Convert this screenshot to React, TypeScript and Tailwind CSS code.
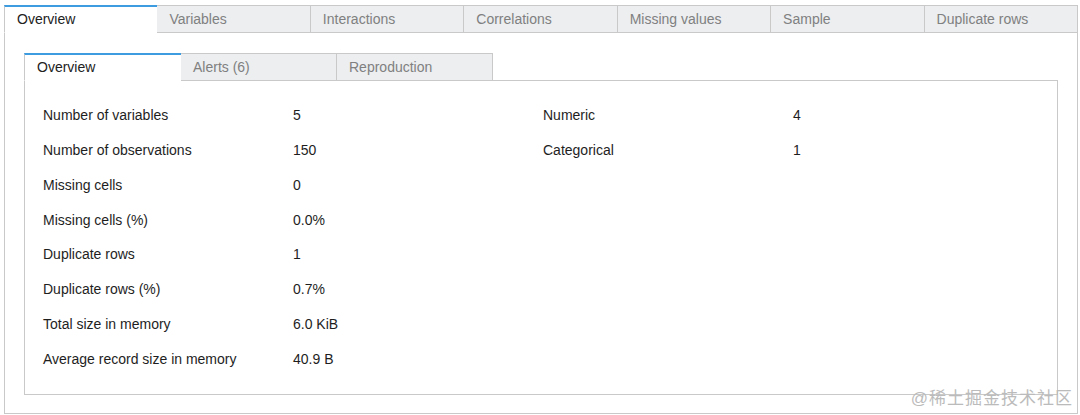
import React from 'react';

const OUTER_TABS = ['Overview', 'Variables', 'Interactions', 'Correlations', 'Missing values', 'Sample', 'Duplicate rows'];
const INNER_TABS = ['Overview', 'Alerts (6)', 'Reproduction'];

const LEFT_ROWS: [string, string][] = [
  ['Number of variables', '5'],
  ['Number of observations', '150'],
  ['Missing cells', '0'],
  ['Missing cells (%)', '0.0%'],
  ['Duplicate rows', '1'],
  ['Duplicate rows (%)', '0.7%'],
  ['Total size in memory', '6.0 KiB'],
  ['Average record size in memory', '40.9 B'],
];

const RIGHT_ROWS: [string, string][] = [
  ['Numeric', '4'],
  ['Categorical', '1'],
];

const Tab: React.FC<{ label: string; active: boolean; className?: string }> = ({ label, active, className }) => (
  <div
    className={
      (active
        ? 'bg-white text-[#222] border-t-2 border-t-[#3d9be0] border-l border-l-[#c9c9c9] border-b border-b-white '
        : 'bg-[#eceef0] text-[#808080] border border-[#c9c9c9] border-l-0 ') +
      'h-[28px] flex items-center px-3 text-[14px] ' +
      (className ?? '')
    }
  >
    {label}
  </div>
);

const StatsTable: React.FC<{ rows: [string, string][] }> = ({ rows }) => (
  <div className="flex flex-col w-[500px]">
    {rows.map(([k, v]) => (
      <div key={k} className="flex h-[35px] items-center text-[14px] text-[#1e1e1e]">
        <div className="w-[250px]">{k}</div>
        <div>{v}</div>
      </div>
    ))}
  </div>
);

export default function App() {
  return (
    <div className="relative w-[1080px] h-[415px] bg-white pt-[5px] pl-[4px] overflow-hidden" style={{ fontFamily: '"Liberation Sans", Arial, sans-serif' }}>
      <div className="w-[1074px]">
        {/* Outer tabs */}
        <div className="flex">
          {OUTER_TABS.map((t, i) => (
            <Tab key={t} label={t} active={i === 0} className="flex-1" />
          ))}
        </div>
        <div className="border-x border-b border-[#c9c9c9] h-[381px] pt-[20px] pl-[19px] pr-[19px]">
          {/* Inner tabs */}
          <div className="flex items-end">
            {INNER_TABS.map((t, i) => (
              <Tab key={t} label={t} active={i === 0} className={i === 0 ? 'w-[157px]' : 'w-[156px]'} />
            ))}
            <div className="flex-1 border-b border-[#c9c9c9]" />
          </div>
          <div className="border-x border-b border-[#c9c9c9] h-[314px] pl-[18px] py-[17px] flex">
            <StatsTable rows={LEFT_ROWS} />
            <StatsTable rows={RIGHT_ROWS} />
          </div>
        </div>
      </div>
      <div
        className="absolute right-[7px] bottom-[4px] text-[17px] text-[#bbbbbb] tracking-[1px]"
        style={{ fontFamily: '"Liberation Sans", "Noto Sans CJK SC", sans-serif' }}
      >
        @稀土掘金技术社区
      </div>
    </div>
  );
}
